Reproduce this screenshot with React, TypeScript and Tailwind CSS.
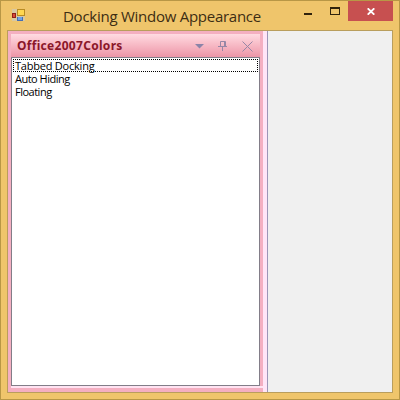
import React from "react";

const items = [
  { label: "Tabbed Docking", style: "mx-px mt-px border border-dotted border-black pl-px leading-[11px] tracking-[-0.22px]" },
  { label: "Auto Hiding", style: "pl-[3px] leading-[13px] tracking-[-0.5px]" },
  { label: "Floating", style: "pl-[3px] leading-[13px] tracking-[-0.5px]" },
];

function AppIcon() {
  return (
    <svg width="14" height="14" viewBox="0 0 14 14" shapeRendering="crispEdges">
      <rect y="1" width="13" height="12" fill="#d8c8a2" />
      <rect y="5" width="4" height="5" fill="#8f2019" />
      <rect x="1" y="6" width="2" height="3" fill="#d8493a" />
      <rect x="5" y="1" width="8" height="7" fill="#b98b22" />
      <rect x="6" y="2" width="6" height="5" fill="#ffd750" />
      <rect x="5" y="9" width="6" height="4" fill="#456eb5" />
      <rect x="6" y="9" width="4" height="3" fill="#70a4e2" />
    </svg>
  );
}

function TitleBar() {
  return (
    <header className="flex h-[29px] shrink-0 items-start">
      <div className="ml-[11px] mt-[7px]"><AppIcon /></div>
      <h1 className="ml-[37px] mt-[3px] w-[212px] whitespace-nowrap font-['Open_Sans',sans-serif] text-[15px] leading-[24px] tracking-[-0.26px] text-[#3d2d13]">
        Docking Window Appearance
      </h1>
      <div className="flex flex-1 items-start">
        <svg className="ml-[29px] mt-[12px]" width="8" height="2"><rect width="8" height="2" fill="#30230c" /></svg>
        <svg className="ml-[18px] mt-[6px]" width="10" height="8" shapeRendering="crispEdges"><path d="M0 0H10V8H0ZM1 2V7H9V2Z" fill="#30230c" fillRule="evenodd" /></svg>
      </div>
      <div className="mr-[6px] flex h-5 w-[45px] items-center justify-center bg-[#c75050]">
        <svg width="8" height="7" viewBox="0 0 8 7"><path d="M.7.3 7.3 6.7M7.3.3.7 6.7" stroke="#fff" strokeWidth="1.8" /></svg>
      </div>
    </header>
  );
}

function DockPanel() {
  return (
    <section className="flex w-[255px] flex-col bg-[#f4afc1] pl-[3px] pt-[3px]">
      <div className="flex h-[23px] w-[249px] shrink-0 items-center bg-gradient-to-b from-[#ffdbe2] to-[#ec95a7] pl-[6px]">
        <h2 className="w-[178px] shrink-0 whitespace-nowrap font-['Noto_Sans',sans-serif] text-[12px] font-bold leading-[22px] tracking-[0.3px] text-[#8b1729]">Office2007Colors</h2>
        <svg className="shrink-0" width="64" height="12" viewBox="0 0 64 12" fill="none" stroke="#9787a6">
          <path d="M0 4H9L4.5 8.5Z" fill="#8b84a8" stroke="none" />
          <path d="M25.5 1.5H30.5V6.5M25.5 1.5V6.5M29.5 1.5V6.5M23 6.5H32M27.5 7V11" />
          <path d="m47.5 1.5 10 10m0-10-10 10" />
        </svg>
      </div>
      <div className="w-[249px] flex-1 border border-[#827d88] bg-white">
        <ul className="font-['Open_Sans',sans-serif] text-[11px] text-black">
          {items.map((item) => (
            <li key={item.label} className={`h-[13px] whitespace-nowrap ${item.style}`}>{item.label}</li>
          ))}
        </ul>
      </div>
      <div className="h-[2px] w-[252px] bg-[#ffe3f2]" />
      <div className="h-[4px]" />
    </section>
  );
}

export default function App() {
  return (
    <main className="flex h-[400px] w-[400px] flex-col overflow-hidden border border-[#b89746] bg-[#efc56b]">
      <TitleBar />
      <div className="ml-[6px] flex h-[363px] w-[386px] shrink-0 border border-[#b99e5d] bg-[#f0f0f0]">
        <DockPanel />
        <div className="w-[4px] bg-[#ffe5f7]" />
        <div className="w-px bg-[#9c95b7]" />
        <div className="flex-1 bg-[#f0f0f0]" />
      </div>
    </main>
  );
}
